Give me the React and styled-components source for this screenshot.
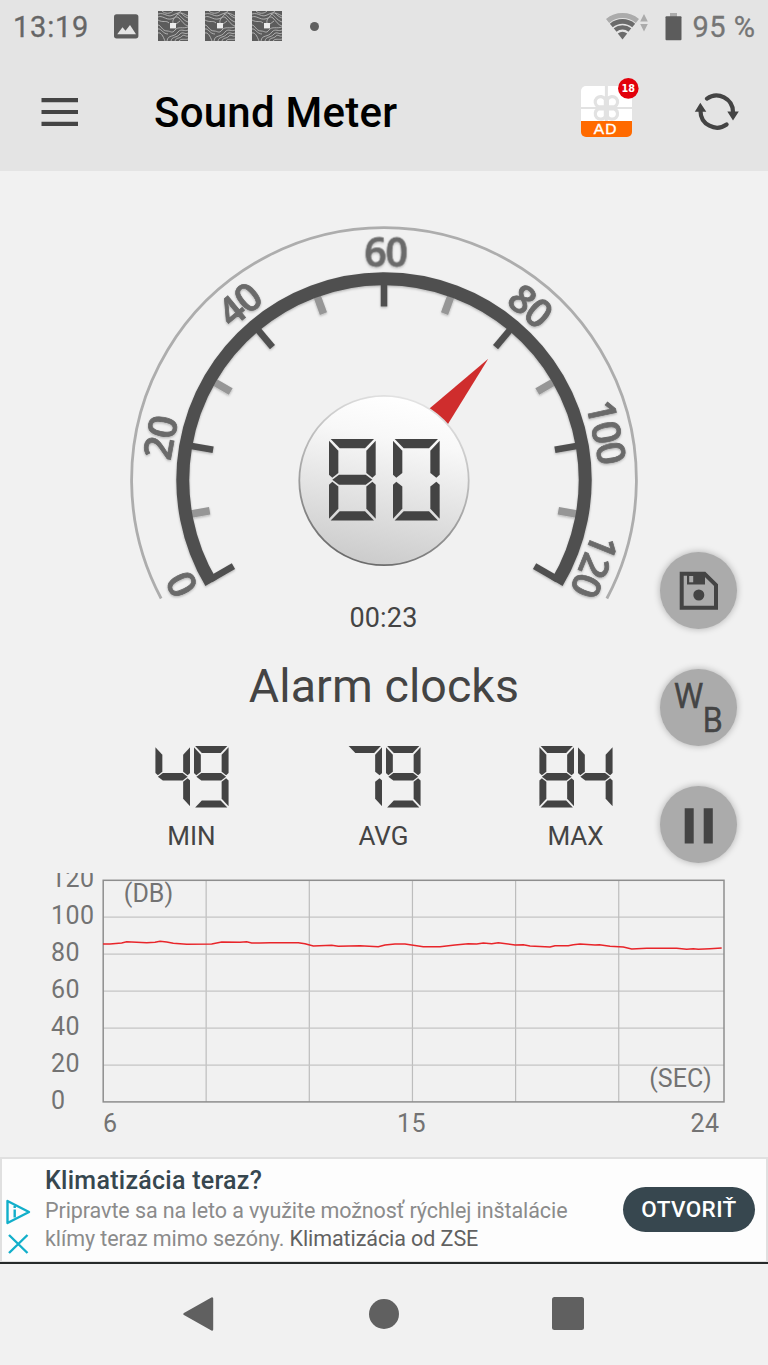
import React from "react";
import styled, { createGlobalStyle } from "styled-components";

const ink = "#444444";

const GlobalStyle = createGlobalStyle`
  * { box-sizing: border-box; }
  body { margin: 0; background: #f1f1f1; font-family: Roboto, "Liberation Sans", sans-serif; }
  svg { display: block; }
`;

const Screen = styled.div`
  position: relative;
  width: 768px;
  height: 1365px;
  display: flex;
  flex-direction: column;
  background: #f1f1f1;
  overflow: hidden;
`;

const StatusBar = styled.header`
  height: 53px;
  flex: none;
  display: flex;
  align-items: center;
  justify-content: space-between;
  padding: 0 12.5px 0 13px;
  background: #e4e4e4;
`;

const StatusGroup = styled.div`
  display: flex;
  align-items: center;
`;

const StatusText = styled.span`
  font-size: 29px;
  line-height: 34px;
  letter-spacing: ${(p) => p.$spacing}px;
  -webkit-text-stroke: 0.3px ${(p) => p.$color};
  color: ${(p) => p.$color};
`;

const AppBar = styled.div`
  height: 118px;
  flex: none;
  display: flex;
  align-items: center;
  padding: 0 28px 0 40px;
  background: #e4e4e4;
`;

const Title = styled.h1`
  flex: 1;
  margin: 1px 0 0 75px;
  font-size: 42px;
  font-weight: 500;
  line-height: 50px;
  letter-spacing: 0.25px;
  color: #000;
`;

const IconButton = styled.button`
  display: block;
  padding: 0 0 ${(p) => p.$lift || 0}px;
  margin: 0 0 0 ${(p) => p.$gap || 0}px;
  border: 0;
  background: none;
`;

const GaugeArea = styled.section`
  position: relative;
  height: 430px;
  flex: none;
`;

const GaugeDrawing = styled.svg`
  overflow: visible;
`;

const Readout = styled.div`
  position: absolute;
  left: 329px;
  top: 268px;
`;

const LcdRow = styled.div`
  display: flex;
  justify-content: center;
  gap: ${(p) => p.$gap}px;
`;

const LcdDigit = styled.div`
  display: grid;
  width: ${(p) => p.$w}px;
  height: ${(p) => p.$h}px;
`;

const Segment = styled.i`
  grid-area: 1 / 1;
  background: #434343;
  clip-path: polygon(${(p) => p.$shape});
`;

const Elapsed = styled.div`
  height: 34px;
  flex: none;
  padding-right: 1px;
  text-align: center;
  font-size: 27px;
  line-height: 34px;
  letter-spacing: 0.2px;
  color: ${ink};
`;

const SourceName = styled.div`
  height: 60px;
  margin-top: 21px;
  flex: none;
  text-align: center;
  font-size: 46.5px;
  line-height: 60px;
  letter-spacing: 0.1px;
  color: ${ink};
`;

const Stats = styled.section`
  height: 157px;
  flex: none;
  display: grid;
  grid-template-columns: repeat(3, 192px);
  justify-content: center;
  padding-top: 30px;
`;

const StatLabel = styled.div`
  margin-top: 13px;
  padding-right: 1px;
  text-align: center;
  font-size: 26px;
  line-height: 31px;
  color: ${ink};
`;

const ChartArea = styled.section`
  height: 284px;
  flex: none;
`;

const AxisText = styled.text`
  font-family: Roboto, "Liberation Sans", sans-serif;
  font-size: 25px;
  letter-spacing: ${(p) => (p.$unit ? 0.05 : 0.4)}px;
  fill: #737373;
`;

const DialText = styled.text`
  font-family: "Open Sans", "Noto Sans", sans-serif;
  font-size: 39px;
  font-weight: 600;
  letter-spacing: -1px;
  text-anchor: middle;
  fill: #6a6a6a;
  stroke: #6a6a6a;
  stroke-width: 0.8px;
`;

const AdBanner = styled.section`
  height: 105px;
  flex: none;
  display: flex;
  align-items: center;
  background: #fdfdfd;
  border: 2px solid #e0e0e0;
  border-bottom-width: 1px;
`;

const AdMarks = styled.div`
  width: 43px;
  padding: 33px 0 0 3px;
  display: flex;
  flex-direction: column;
  gap: 9px;
`;

const AdCopy = styled.div`
  flex: 1;
`;

const AdTitle = styled.div`
  margin: -1px 0 1px;
  font-size: 25px;
  font-weight: 500;
  line-height: 30px;
  letter-spacing: 0.27px;
  white-space: nowrap;
  color: #37474f;
`;

const AdLine = styled.div`
  font-size: 21.5px;
  line-height: 28px;
  letter-spacing: -0.08px;
  white-space: nowrap;
  color: #8b8b8b;
`;

const Advertiser = styled.span`
  color: #616161;
`;

const OpenButton = styled.button`
  width: 132px;
  height: 45px;
  margin: -1px 11px 0 0;
  padding: 0;
  border: 0;
  border-radius: 23px;
  background: #37474f;
  color: #fff;
  font: 500 22.5px/43px Roboto, sans-serif;
  letter-spacing: 0.4px;
`;

const NavBar = styled.nav`
  flex: 1;
  border-top: 2px solid #262a2a;
  display: flex;
  align-items: center;
  justify-content: center;
  gap: 151.5px;
  padding: 0 2.5px 2px 0;
`;

const BackIcon = styled.svg`
  margin-right: 2.5px;
`;

const FabColumn = styled.div`
  position: absolute;
  left: 660px;
  top: 552px;
  display: flex;
  flex-direction: column;
  gap: 40.2px;
`;

const Fab = styled.button`
  width: 77px;
  height: 77px;
  padding: 0;
  border: 0;
  border-radius: 50%;
  background: #ababab;
  box-shadow: 0 0 7px rgba(0, 0, 0, 0.28);
`;

const FabLetter = styled.text`
  font-family: "Open Sans", "Noto Sans", sans-serif;
  font-size: 34px;
  font-weight: 500;
  fill: ${ink};
  stroke: ${ink};
  stroke-width: 0.7px;
`;

const SEGMENTS = {
  a: [[5, 0], [135, 0], [108, 28], [32, 28]],
  f: [[0, 5], [28, 35], [28, 102], [10, 116], [0, 107]],
  b: [[140, 5], [112, 35], [112, 102], [130, 116], [140, 107]],
  g: [[10, 122], [30, 107], [110, 107], [130, 122], [110, 137], [30, 137]],
  e: [[0, 239], [28, 209], [28, 142], [10, 128], [0, 137]],
  c: [[140, 239], [112, 209], [112, 142], [130, 128], [140, 137]],
  d: [[5, 244], [135, 244], [108, 216], [32, 216]],
};

const LIT = {
  0: "abcdef",
  4: "fgbc",
  7: "abc",
  8: "abcdefg",
  9: "abcdfg",
};

const toShape = (points) =>
  points
    .map(([x, y]) => `${((x / 140) * 100).toFixed(2)}% ${((y / 244) * 100).toFixed(2)}%`)
    .join(", ");

function Lcd({ value, w, h, gap }) {
  return (
    <LcdRow $gap={gap} role="img" aria-label={value}>
      {value.split("").map((digit, i) => (
        <LcdDigit key={i} $w={w} $h={h}>
          {LIT[digit].split("").map((s) => (
            <Segment key={s} $shape={toShape(SEGMENTS[s])} />
          ))}
        </LcdDigit>
      ))}
    </LcdRow>
  );
}

const CX = 384;
const CY = 480;
const polar = (r, deg) => {
  const a = (deg * Math.PI) / 180;
  return [CX + r * Math.sin(a), CY - r * Math.cos(a)];
};
const arc = (r, deg) => {
  const [x1, y1] = polar(r, -deg);
  const [x2, y2] = polar(r, deg);
  return `M${x1} ${y1}A${r} ${r} 0 1 1 ${x2} ${y2}`;
};

const MAJOR = [-119.8, -80, -40, 0, 40, 80, 119.8];
const MINOR = [-100, -60, -20, 20, 60, 100];
const DIAL_LABELS = [
  ["0", -117.4],
  ["20", -79.3],
  ["40", -39.5],
  ["60", 0.4],
  ["80", 40],
  ["100", 77.8],
  ["120", 112.1],
];

function Ticks({ angles, inner, width, color }) {
  return angles.map((a) => {
    const [x1, y1] = polar(inner, a);
    const [x2, y2] = polar(200, a);
    return <line key={a} x1={x1} y1={y1} x2={x2} y2={y2} stroke={color} strokeWidth={width} />;
  });
}

function Gauge() {
  return (
    <GaugeArea>
      <GaugeDrawing width="768" height="430" viewBox="0 171 768 430">
        <defs>
          <linearGradient id="hub" x1="0.6" y1="0" x2="0.4" y2="1">
            <stop offset="0" stopColor="#ffffff" />
            <stop offset="0.25" stopColor="#f8f8f8" />
            <stop offset="1" stopColor="#cbcbcb" />
          </linearGradient>
          <linearGradient id="rim" x1="0.65" y1="0" x2="0.35" y2="1">
            <stop offset="0" stopColor="#e4e4e4" />
            <stop offset="0.5" stopColor="#b0b0b0" />
            <stop offset="1" stopColor="#686868" />
          </linearGradient>
          <filter id="soft" x="-10%" y="-10%" width="120%" height="120%">
            <feDropShadow dx="0" dy="1.2" stdDeviation="1.2" floodColor="#000" floodOpacity="0.25" />
          </filter>
        </defs>
        <path d={arc(252.4, 118)} fill="none" stroke="#adadad" strokeWidth="2.8" />
        <g filter="url(#soft)">
          <Ticks angles={MINOR} inner={177} width={7.6} color="#969696" />
          <Ticks angles={MAJOR} inner={173.5} width={6.6} color="#505050" />
          <path d={arc(201.2, 120.7)} fill="none" stroke="#505050" strokeWidth="13" />
          {DIAL_LABELS.map(([text, a]) => {
            const [x, y] = polar(213.5, a);
            return (
              <DialText key={text} transform={`translate(${x} ${y}) rotate(${a})`}>
                {text}
              </DialText>
            );
          })}
        </g>
        <path d="M488.3 358.8L410 425L435 445Z" fill="#cf2d2d" />
        <circle cx="384" cy="480.5" r="84.7" fill="url(#hub)" stroke="url(#rim)" strokeWidth="1.8" />
      </GaugeDrawing>
      <Readout>
        <Lcd value="80" w={46.7} h={81.5} gap={17.3} />
      </Readout>
    </GaugeArea>
  );
}

const LEFT_TRACE = [
  [219, 252], [240, 252], [275, 249], [290, 245], [350, 248], [375, 247], [390, 244], [410, 246],
  [430, 250], [470, 253], [545, 252], [575, 246], [630, 247], [650, 245], [665, 249], [690, 249],
  [720, 248], [805, 248], [825, 251], [850, 258], [905, 256], [925, 259], [990, 257], [1045, 260],
  [1065, 255], [1095, 252], [1120, 252],
].map(([x, y]) => [30 + x / 3, 860 + y / 3]);
const RIGHT_TRACE = [
  [15, 252], [70, 260], [120, 260], [165, 255], [205, 251], [230, 252], [250, 249], [275, 251],
  [295, 248], [345, 255], [370, 254], [390, 258], [450, 261], [465, 257], [505, 257], [520, 254],
  [540, 252], [585, 255], [598, 254], [630, 259], [670, 261], [695, 267], [740, 265], [830, 265],
  [860, 268], [880, 266], [895, 268], [930, 266], [965, 264],
].map(([x, y]) => [400 + x / 3, 860 + y / 3]);
const TRACE = [...LEFT_TRACE, ...RIGHT_TRACE].map(([x, y]) => `${x.toFixed(1)},${y.toFixed(1)}`).join(" ");

function Chart() {
  return (
    <ChartArea>
      <svg width="768" height="284" viewBox="0 873 768 284">
        {[1, 2, 3, 4, 5].map((i) => (
          <React.Fragment key={i}>
            <line x1={103 + i * 103.15} x2={103 + i * 103.15} y1="880" y2="1102" stroke="#bdbdbd" strokeWidth="1.2" />
            <line x1="103" x2="724" y1={880.2 + i * 37} y2={880.2 + i * 37} stroke="#c4c4c4" strokeWidth="1.3" />
          </React.Fragment>
        ))}
        <rect x="103.2" y="880.3" width="620.8" height="221.6" fill="none" stroke="#8e8e8e" strokeWidth="1.5" />
        <polyline points={TRACE} fill="none" stroke="#e8252a" strokeWidth="1.6" />
        {[120, 100, 80, 60, 40, 20, 0].map((v, i) => (
          <AxisText key={v} x="51" y={887.3 + i * 36.95}>{v}</AxisText>
        ))}
        <AxisText $unit x="123.8" y="902.3">(DB)</AxisText>
        <AxisText $unit x="649.2" y="1087.3">(SEC)</AxisText>
        <AxisText x="103" y="1131.7">6</AxisText>
        <AxisText x="397" y="1131.7">15</AxisText>
        <AxisText x="690.5" y="1131.7">24</AxisText>
      </svg>
    </ChartArea>
  );
}

const Photo = styled.svg`
  margin: 0 19px 0 24px;
`;

function PhotoIcon() {
  return (
    <Photo width="26" height="26" viewBox="0 0 26 26">
      <rect x="1" y="0.2" width="24.4" height="24.2" rx="2.6" fill="#5c5c5c" />
      <path d="M4.2 20.2L9.5 13.3L12.5 16.7L17 11L23 20.2Z" fill="#e4e4e4" />
    </Photo>
  );
}

const Terrain = styled.svg`
  margin: -1px 17px 0 0;
`;

function TerrainIcon() {
  return (
    <Terrain width="30" height="30" viewBox="0 0 30 30">
      <rect width="30" height="30" fill="#5c5c5c" />
      <g fill="none" stroke="#c4c4c4" strokeWidth="0.8">
        <path d="M0 3C7 1 9 7 15 4S23 1 30 5M0 6C4 4 8 9 13 8C19 7 18 3 23 0M4 0C7 3 12 3 15 0" />
        <path d="M0 14C3 14 4 20 9 20C13 20 14 23 17 19C20 15 25 18 30 16M0 18C3 17 5 23 10 23M0 22C3 21 5 25 7 30" />
        <path d="M15 12C14 8 18 4 21 7C24 10 26 14 30 15M19 3C23 4 24 9 30 11M23 2C25 4 27 6 30 7M9 30C10 23 16 27 20 21C23 17 27 21 30 19M13 30C14 25 19 27 22 23C25 20 27 24 30 22M17 30C18 26 22 28 24 25C26 23 28 26 30 25M21 30C23 27 27 29 30 28" />
        <path d="M11 12C8 9 5 12 0 9M18 13L22 10" />
      </g>
      <rect x="12" y="12" width="6" height="5.4" fill="#ececec" />
    </Terrain>
  );
}

const Wifi = styled.svg`
  margin-right: 15.5px;
`;

function WifiIcon() {
  const ring = (r) => {
    const dx = r * Math.sin(0.69);
    const dy = r * Math.cos(0.69);
    return `M${16.5 - dx} ${27 - dy}A${r} ${r} 0 0 1 ${16.5 + dx} ${27 - dy}`;
  };
  return (
    <Wifi width="44" height="28" viewBox="0 1 44 28">
      <path d={ring(23.4)} fill="none" stroke="#ababab" strokeWidth="5" />
      <path d={ring(17.6)} fill="none" stroke="#6b6b6b" strokeWidth="4.6" />
      <path d={ring(11.6)} fill="none" stroke="#6b6b6b" strokeWidth="4.4" />
      <path d="M16.5 27.5L11.8 21.6A7.5 7.5 0 0 1 21.2 21.6Z" fill="#6b6b6b" />
      <path d="M34.2 9.5L38 2L41.8 9.5ZM34.2 12L38 19.5L41.8 12Z" fill="#ababab" />
    </Wifi>
  );
}

const Battery = styled.svg`
  margin-right: 10px;
`;

const Dot = styled.i`
  width: 9px;
  height: 9px;
  margin: -1px 0 0 10.5px;
  border-radius: 50%;
  background: #606060;
`;

function GiftIcon() {
  return (
    <svg width="60" height="60" viewBox="579 78 60 60">
      <path d="M581 91a5 5 0 0 1 5-5H627a5 5 0 0 1 5 5V121H581Z" fill="#fff" />
      <path d="M606.4 86V121" stroke="#e2e2e2" strokeWidth="3" />
      <path d="M581 108H632" stroke="#e2e2e2" strokeWidth="2" />
      <path
        d="M605.4 106.8H598.2A5.4 5.4 0 1 1 605.4 99.5ZM607.4 106.8H614.6A5.4 5.4 0 1 0 607.4 99.5ZM605.4 109H598.2A5.4 5.4 0 1 0 605.4 116.4ZM607.4 109H614.6A5.4 5.4 0 1 1 607.4 116.400Z"
        fill="#fff"
        stroke="#e2e2e2"
        strokeWidth="3.2"
        strokeLinejoin="round"
      />
      <path d="M581 121H632V132a5 5 0 0 1-5 5H586a5 5 0 0 1-5-5Z" fill="#ff6a00" />
      <text x="605.8" y="134.4" textAnchor="middle" fontFamily="Liberation Sans, sans-serif" fontSize="15.5" letterSpacing="1.2" fill="#fff" stroke="#fff" strokeWidth="0.4">AD</text>
      <circle cx="628.3" cy="88.4" r="10.3" fill="#e2000b" />
      <text x="628.2" y="92.1" textAnchor="middle" fontFamily="DejaVu Sans, sans-serif" fontWeight="700" fontSize="10" textLength="13.5" lengthAdjust="spacingAndGlyphs" fill="#fff">18</text>
    </svg>
  );
}

function SyncIcon() {
  return (
    <svg width="46" height="42" viewBox="694 91 46 42">
      <g fill="none" stroke="#444" strokeWidth="4.2" strokeLinecap="round">
        <path d="M707 98.6A16.5 16.5 0 0 1 733 112" />
        <path d="M726.6 124.5A16.5 16.5 0 0 1 700.5 111" />
      </g>
      <path d="M727.3 111.5H738.8L733 120.5ZM694.8 111.7H706.3L700.3 102.7Z" fill="#444" />
    </svg>
  );
}

export default function App() {
  return (
    <Screen>
      <GlobalStyle />
      <StatusBar>
        <StatusGroup>
          <StatusText $color="#666" $spacing={0.8}>13:19</StatusText>
          <PhotoIcon />
          <TerrainIcon />
          <TerrainIcon />
          <TerrainIcon />
          <Dot />
        </StatusGroup>
        <StatusGroup>
          <WifiIcon />
          <Battery width="17" height="28" viewBox="0 0 17 28">
            <rect x="5" y="0" width="7" height="4" fill="#ababab" />
            <rect x="0.5" y="3.2" width="16" height="24" rx="1" fill="#5c5c5c" />
          </Battery>
          <StatusText $color="#757575" $spacing={0.5}>95 %</StatusText>
        </StatusGroup>
      </StatusBar>
      <AppBar>
        <IconButton aria-label="Menu" $lift={1}>
          <svg width="39" height="32" viewBox="0 0 39 32">
            <path d="M1.5 4.2H38M1.5 16H38M1.5 27.8H38" stroke="#444" strokeWidth="4.2" />
          </svg>
        </IconButton>
        <Title>Sound Meter</Title>
        <IconButton aria-label="Gift" $lift={8}>
          <GiftIcon />
        </IconButton>
        <IconButton aria-label="Reset" $gap={55}>
          <SyncIcon />
        </IconButton>
      </AppBar>
      <Gauge />
      <Elapsed>00:23</Elapsed>
      <SourceName>Alarm clocks</SourceName>
      <Stats>
        {[["49", "MIN"], ["79", "AVG"], ["84", "MAX"]].map(([value, label]) => (
          <div key={label}>
            <Lcd value={value} w={34.7} h={61.5} gap={3.8} />
            <StatLabel>{label}</StatLabel>
          </div>
        ))}
      </Stats>
      <Chart />
      <AdBanner>
        <AdMarks>
          <svg width="26" height="26" viewBox="0 0 26 26">
            <path d="M2.5 2L24 13L2.5 24Z" fill="none" stroke="#12afca" strokeWidth="2.4" strokeLinejoin="round" />
            <path d="M9.7 10.5V18.5M9.7 6.8V9" stroke="#12afca" strokeWidth="2.4" />
          </svg>
          <svg width="26" height="20" viewBox="0 0 26 20">
            <path d="M4 1L22.5 19M22.5 1L4 19" stroke="#12afca" strokeWidth="2.4" />
          </svg>
        </AdMarks>
        <AdCopy>
          <AdTitle>Klimatizácia teraz?</AdTitle>
          <AdLine>Pripravte sa na leto a využite možnosť rýchlej inštalácie</AdLine>
          <AdLine>
            klímy teraz mimo sezóny. <Advertiser>Klimatizácia od ZSE</Advertiser>
          </AdLine>
        </AdCopy>
        <OpenButton>OTVORIŤ</OpenButton>
      </AdBanner>
      <NavBar>
        <BackIcon width="32" height="36" viewBox="0 0 32 36">
          <path d="M30 2.5V33.5L2.5 18Z" fill="#606060" stroke="#606060" strokeWidth="2.4" strokeLinejoin="round" />
        </BackIcon>
        <svg width="32" height="32" viewBox="0 0 32 32">
          <circle cx="16" cy="16" r="15" fill="#606060" />
        </svg>
        <svg width="32" height="33" viewBox="0 0 32 33">
          <rect width="32" height="33" rx="2.5" fill="#606060" />
        </svg>
      </NavBar>
      <FabColumn>
        <Fab aria-label="Save">
          <svg width="77" height="77" viewBox="660 551.5 77 77">
            <path d="M681.7 573.2H704.5L716 584.5V607.3H681.7Z" fill="none" stroke="#444" strokeWidth="4" />
            <path d="M687 572H705V584H687Z" fill="#444" />
            <path d="M689.2 575.5H693.2V581.8H689.2Z" fill="#ababab" />
            <circle cx="698.8" cy="594.5" r="5.5" fill="#444" />
          </svg>
        </Fab>
        <Fab aria-label="Weighting">
          <svg width="77" height="77" viewBox="660 669 77 77">
            <FabLetter x="674.5" y="708.3" textLength="28.5" lengthAdjust="spacingAndGlyphs">W</FabLetter>
            <FabLetter x="702.5" y="731.8" textLength="20" lengthAdjust="spacingAndGlyphs">B</FabLetter>
          </svg>
        </Fab>
        <Fab aria-label="Pause">
          <svg width="77" height="77" viewBox="660 787 77 77">
            <path d="M684.7 809.2H693.7V844.4H684.7ZM703.7 809.2H712.8V844.4H703.7Z" fill="#444" />
          </svg>
        </Fab>
      </FabColumn>
    </Screen>
  );
}
